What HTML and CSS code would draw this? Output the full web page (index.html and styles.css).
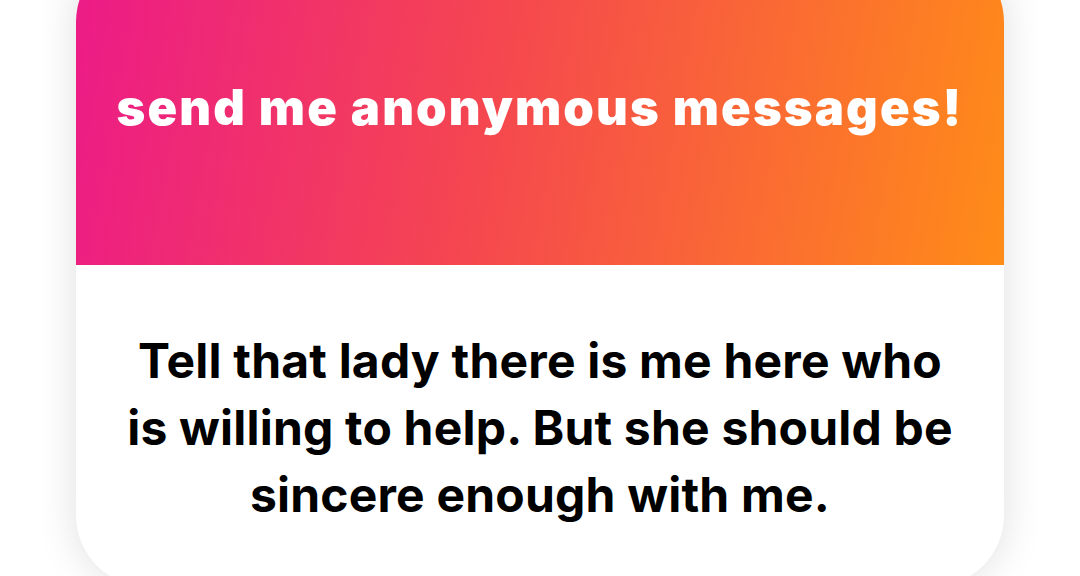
FILE: index.html
```html
<!DOCTYPE html>
<html>
<head>
<meta charset="utf-8">
<link rel="stylesheet" href="styles.css">
</head>
<body>
<div class="card">
  <div class="header">
    <h1 class="title">send me anonymous messages!</h1>
  </div>
  <div class="content">
    <p class="message">Tell that lady there is me here who<br>is willing to help. But she should be<br>sincere enough with me.</p>
  </div>
</div>
</body>
</html>
```
FILE: styles.css
```css
html, body {
  margin: 0;
  padding: 0;
  background: #ffffff;
  width: 1080px;
  height: 576px;
  overflow: hidden;
}
.card {
  width: 928px;
  margin: -50px 0 0 76px;
  border-radius: 72px;
  overflow: hidden;
  background: #ffffff;
  box-shadow: 0 0 40px rgba(0, 0, 0, 0.13);
}
.header {
  height: 315px;
  display: flex;
  align-items: center;
  justify-content: center;
  background: linear-gradient(100deg, #ec1a88 0%, #f5474f 45%, #ff8c18 100%);
}
.title {
  margin: 0;
  color: #ffffff;
  font-family: Inter, "Noto Sans", sans-serif;
  font-weight: 900;
  font-size: 49px;
  line-height: normal;
  letter-spacing: 2.1px;
  white-space: nowrap;
}
.content {
  padding: 62px 0 59px 0;
}
.message {
  margin: 0;
  text-align: center;
  color: #000000;
  font-family: Inter, "Noto Sans", sans-serif;
  font-weight: 700;
  font-size: 48px;
  line-height: 67px;
  letter-spacing: 0.2px;
}
```
